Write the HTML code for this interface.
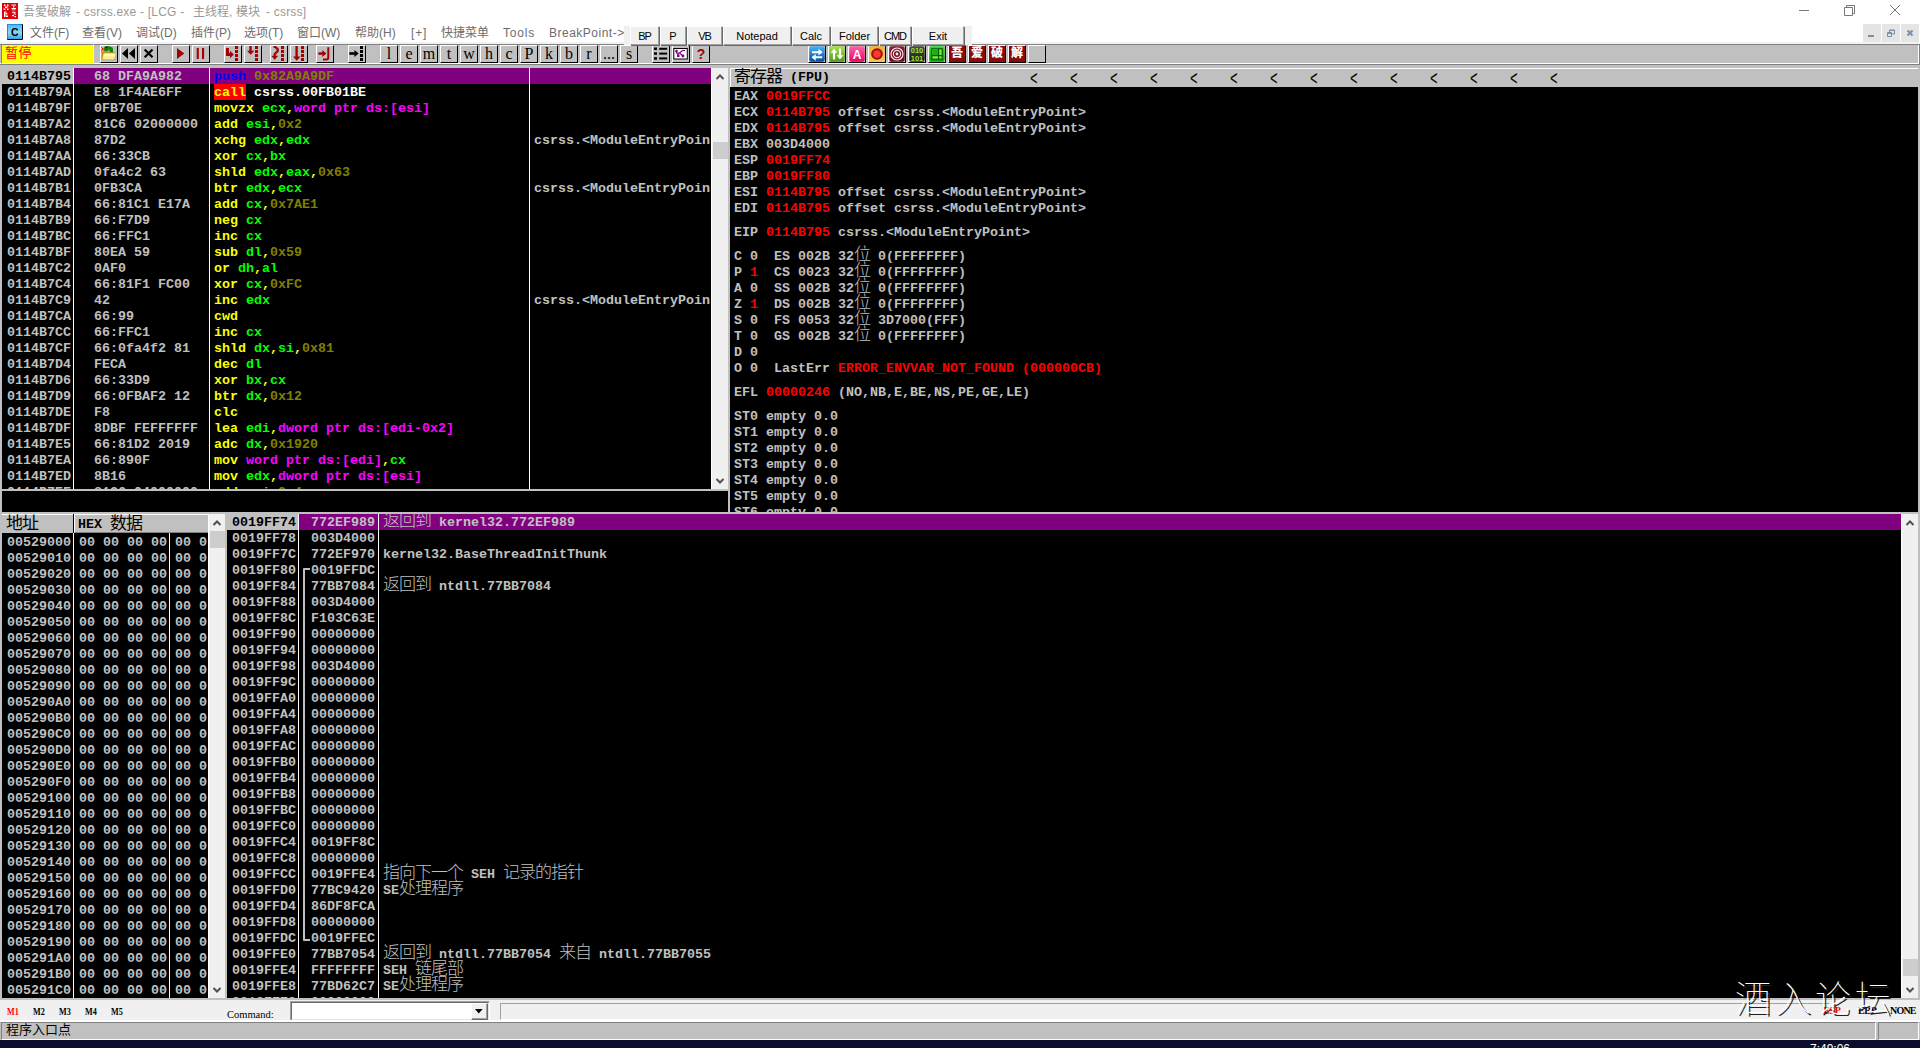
<!DOCTYPE html><html><head><meta charset="utf-8"><title>吾愛破解 - csrss.exe</title><style>
*{box-sizing:border-box}
html,body{margin:0;padding:0}
body{width:1920px;height:1048px;overflow:hidden;background:#fff;position:relative;font-family:"Liberation Sans","Noto Sans CJK SC",sans-serif}
.abs{position:absolute}
.mono{font-family:"Liberation Mono","Noto Sans CJK SC",monospace;font-weight:bold;font-size:13.33px;line-height:16px;white-space:pre;color:#c0c0c0}
.cj{font-family:"Liberation Sans","Noto Sans CJK SC",sans-serif;font-weight:300;font-size:17px;letter-spacing:-1px;line-height:16px;display:inline-block;vertical-align:top;position:relative;top:-2px}
.row{position:absolute;height:16px;white-space:pre}
.pane{position:absolute;background:#000;overflow:hidden}
.vl{position:absolute;width:1px;background:#fff;top:0;bottom:0}
.y{color:#ffff00}.g{color:#00ff00}.m{color:#ff00ff}.o{color:#808000}.r{color:#ff0000}.w{color:#fff}.b{color:#0000ff}
.sb{position:absolute;background:#f0f0f0;border-left:1px solid #fff}
.thumb{position:absolute;left:1px;width:15px;background:#cdcdcd}
.tb{position:absolute;top:45px;width:18px;height:18px;background:#c0c0c0;border-top:1px solid #fff;border-left:1px solid #fff;border-right:1px solid #000;border-bottom:1px solid #000;overflow:hidden}
.tb svg{position:absolute;left:0;top:0}
.tbl{font-family:"Liberation Serif",serif;font-size:16px;line-height:15px;text-align:center;color:#000}
.menu span{position:absolute;top:0;white-space:pre}
.btn2{position:absolute;top:26px;height:19px;background:#f0f0f0;border-top:1px solid #fff;border-left:1px solid #fff;border-right:1px solid #a0a0a0;border-bottom:1px solid #a0a0a0;box-shadow:1px 1px 0 #696969;font-size:11px;line-height:18px;text-align:center;color:#000;z-index:3}
</style></head><body>
<div class="abs" style="left:0;top:0;width:1920px;height:22px;background:#fff"></div>
<svg class="abs" style="left:2px;top:3px" width="16" height="16" viewBox="0 0 16 16"><rect width="16" height="16" fill="#e0040a"/><g fill="#fff"><rect x="2" y="1.500" width="1.500" height="1.500"/><rect x="5" y="1.500" width="1.500" height="2"/><rect x="3" y="3.500" width="2.500" height="1.500"/><rect x="1.500" y="5.500" width="2" height="1.300"/><rect x="5" y="5.500" width="1.500" height="1.500"/><rect x="9.500" y="1.500" width="4.500" height="1"/><rect x="11" y="3" width="1.300" height="1.500"/><rect x="9.500" y="5" width="4.500" height="1"/><rect x="10" y="6.500" width="3.500" height=".8"/><rect x="2" y="9" width="1.500" height="5"/><rect x="4" y="10" width="1.300" height="1.500"/><rect x="4" y="12.500" width="2" height="1.500"/><rect x="2.500" y="8.500" width="2" height="1"/><rect x="10" y="8.800" width="3.500" height="1"/><rect x="11.500" y="10.500" width="2.500" height="1"/><rect x="10" y="12" width="2" height="1.200"/><rect x="12.500" y="13" width="1.500" height="1.200"/></g></svg>
<div class="abs" style="left:0;top:4px;font-size:12px;line-height:16px;color:#999;white-space:pre"><span class="abs" style="left:23px">吾愛破解</span><span class="abs" style="left:76px;letter-spacing:.22px">- csrss.exe - [LCG -</span><span class="abs" style="left:193px">主线程,</span><span class="abs" style="left:236px">模块</span><span class="abs" style="left:266px;letter-spacing:.2px">- csrss]</span></div>
<svg class="abs" style="left:1790px;top:0" width="130" height="22" viewBox="0 0 130 22" fill="none" stroke="#777" stroke-width="1"><path d="M9 10.5h10"/><path d="M54.5 7.5h8v8h-8z"/><path d="M56.5 7.5v-2h8v8h-2"/><path d="M100 5l10 10M110 5l-10 10"/></svg>
<div class="abs menu" style="left:0;top:22px;width:1920px;height:22px;background:#fff;font-size:12px;line-height:16px;color:#6d6d6d">
<svg class="abs" style="left:7px;top:2px" width="16" height="16" viewBox="0 0 16 16"><defs><linearGradient id="cg" x1="0" y1="0" x2="0" y2="1"><stop offset="0" stop-color="#58b8f0"/><stop offset=".55" stop-color="#8ad6f8"/><stop offset="1" stop-color="#38a4e8"/></linearGradient></defs><rect x="0" y="0" width="16" height="16" rx="1" fill="#000"/><rect x="0" y="0" width="15" height="15" rx="1" fill="#1590dc"/><rect x="1" y="1" width="14" height="14" fill="url(#cg)"/><text x="7.700" y="11.600" font-family="Liberation Sans, sans-serif" font-size="10.500" font-weight="bold" text-anchor="middle" fill="#000">C</text></svg>
<span style="left:30px;top:3px">文件(F)</span>
<span style="left:82px;top:3px">查看(V)</span>
<span style="left:136px;top:3px">调试(D)</span>
<span style="left:191px;top:3px">插件(P)</span>
<span style="left:244px;top:3px">选项(T)</span>
<span style="left:297px;top:3px">窗口(W)</span>
<span style="left:355px;top:3px">帮助(H)</span>
<span style="left:411px;top:3px;letter-spacing:.8px">[+]</span>
<span style="left:441px;top:3px">快捷菜单</span>
<span style="left:503px;top:3px;letter-spacing:.8px">Tools</span>
<span style="left:549px;top:3px;letter-spacing:.5px">BreakPoint-&gt;</span>
</div>
<div class="abs" style="left:0;top:42px;width:1920px;height:2px;background:#f2f2f2"></div>
<div class="abs" style="left:624px;top:26px;width:348px;height:19px;background:#f0f0f0;z-index:2"></div>
<div class="btn2" style="left:630px;width:29px;letter-spacing:-1px">BP</div>
<div class="btn2" style="left:660px;width:26px">P</div>
<div class="btn2" style="left:687px;width:35px;letter-spacing:-1px">VB</div>
<div class="btn2" style="left:723px;width:68px">Notepad</div>
<div class="btn2" style="left:792px;width:38px">Calc</div>
<div class="btn2" style="left:831px;width:47px">Folder</div>
<div class="btn2" style="left:879px;width:32px;letter-spacing:-1px">CMD</div>
<div class="btn2" style="left:912px;width:52px">Exit</div>
<div class="abs" style="left:1863px;top:24px;width:18px;height:18px;background:#e5e5e5"></div>
<div class="abs" style="left:1882px;top:24px;width:18px;height:18px;background:#e5e5e5"></div>
<div class="abs" style="left:1901px;top:24px;width:18px;height:18px;background:#e5e5e5"></div>
<svg class="abs" style="left:1863px;top:24px" width="56" height="18" viewBox="0 0 56 18" fill="none" stroke="#7a8fa9"><path d="M5 12h6" stroke-width="2"/><path d="M24.5 8.5h4v4h-4z M24.5 9.5h4" stroke-width="1"/><path d="M26.5 8v-2h5v4h-2.5M26.5 6.5h5" stroke-width="1"/><path d="M44.5 6.5l5 5M49.5 6.5l-5 5" stroke-width="2"/></svg>
<div class="abs" style="left:0;top:44px;width:1920px;height:21px;background:#c0c0c0;border-top:1px solid #808080;border-bottom:1px solid #808080;border-right:1px solid #808080"><div class="abs" style="left:0;right:0;bottom:0;height:1px;background:#fff"></div><div class="abs" style="right:0;top:0;bottom:0;width:1px;background:#fff"></div></div>
<div class="abs" style="left:0;top:65px;width:1920px;height:935px;background:#c0c0c0"></div>
<div class="abs" style="left:1px;top:44px;width:93px;height:20px;background:#ffff00;border-top:1px solid #808080;border-left:1px solid #808080;border-right:1px solid #fff;border-bottom:1px solid #fff"><span class="abs" style="left:3px;top:0px;font-family:'Liberation Sans','Noto Sans CJK SC',sans-serif;font-weight:400;font-size:13px;line-height:16px;color:#ff0000;white-space:pre;letter-spacing:.5px">暂停</span></div>
<div class="tb " style="left:100px"><svg width="16" height="16" viewBox="0 0 16 16"><path d="M0.500 6q0-1.500 1.500-1.500h3.500l1.500 1.500h6q1.500 0 1.500 1.500v5q0 1.700-1.700 1.700h-10.600q-1.700 0-1.700-1.700z" fill="#c8981c"/><path d="M3.500 7.300h10.300q1 0 .8 1l-1 4.200q-.3 1-1.300 1h-10q-1 0-.7-1l.9-4.200q.2-1 1-1z" fill="#fdeb98"/><path d="M3.500 8h10.300l-.3 2h-10.500z" fill="#fff8c8"/><path d="M3 2.200q0-2.200 2.500-2.200h2q1.500 0 2 1h1q1.500 0 1.500 2v3.200h-3.500v-2.200h-1v1.200h-2.500q-2 0-2-1.500z" fill="#0a8a0a"/><circle cx="5.300" cy="1.500" r=".7" fill="#000"/><path d="M0.300 1.200l1.700 1.800l3 .3M0.300 4.800l1.700-1.800" stroke="#f00" stroke-width="1" fill="none"/></svg></div>
<div class="tb " style="left:120px"><svg width="16" height="16" viewBox="0 0 16 16"><path d="M1 7.500l6-5.500v11zM8 7.500l6-5.500v11z" fill="#000"/></svg></div>
<div class="tb " style="left:140px"><svg width="16" height="16" viewBox="0 0 16 16"><path d="M3.700 3.500l7.800 7.800M11.500 3.500l-7.800 7.800" stroke="#000" stroke-width="2.200"/></svg></div>
<div class="tb " style="left:172px"><svg width="16" height="16" viewBox="0 0 16 16"><path d="M4 2l7.300 5.500l-7.300 5.500z" fill="#a40000"/></svg></div>
<div class="tb " style="left:192px"><svg width="16" height="16" viewBox="0 0 16 16"><rect x="3.700" y="2" width="2.100" height="11" fill="#a40000"/><rect x="9" y="2" width="2.100" height="11" fill="#a40000"/></svg></div>
<div class="tb " style="left:224px"><svg width="16" height="16" viewBox="0 0 16 16"><rect x="1" y="2" width="3" height="8" fill="#a40000"/><rect x="1" y="7" width="5" height="3" fill="#a40000"/><path d="M5 4.800l3.800 3.700l-3.800 3.700z" fill="#a40000"/><rect x="10" y="0" width="3" height="3" fill="#a40000"/><rect x="10" y="4" width="3" height="3" fill="#a40000"/><rect x="10" y="8" width="3" height="3" fill="#a40000"/><rect x="10" y="12" width="3" height="3" fill="#a40000"/></svg></div>
<div class="tb " style="left:244px"><svg width="16" height="16" viewBox="0 0 16 16"><rect x="4.300" y="0" width="2.400" height="6" fill="#a40000"/><path d="M2 4.800h7.400l-3.700 4z" fill="#a40000"/><rect x="10" y="0" width="3" height="3" fill="#a40000"/><rect x="10" y="4" width="3" height="3" fill="#a40000"/><rect x="10" y="8" width="3" height="3" fill="#a40000"/><rect x="10" y="12" width="3" height="3" fill="#a40000"/></svg></div>
<div class="tb " style="left:270px"><svg width="16" height="16" viewBox="0 0 16 16"><path d="M2.500 1h2l2.300 2.500v1.500l-3.100 3v3" stroke="#a40000" stroke-width="2.200" fill="none"/><path d="M0.200 9.800h7l-3.500 3.900z" fill="#a40000"/><rect x="10" y="0" width="3" height="3" fill="#a40000"/><rect x="10" y="4" width="3" height="3" fill="#a40000"/><rect x="10" y="8" width="3" height="3" fill="#a40000"/><rect x="10" y="12" width="3" height="3" fill="#a40000"/></svg></div>
<div class="tb " style="left:290px"><svg width="16" height="16" viewBox="0 0 16 16"><rect x="4.400" y="0" width="2.400" height="12" fill="#a40000"/><path d="M2 10.500h7.500l-3.750 4.200z" fill="#a40000"/><rect x="10" y="0" width="3" height="3" fill="#a40000"/><rect x="10" y="4" width="3" height="3" fill="#a40000"/><rect x="10" y="8" width="3" height="3" fill="#a40000"/><rect x="10" y="12" width="3" height="3" fill="#a40000"/></svg></div>
<div class="tb " style="left:316px"><svg width="16" height="16" viewBox="0 0 16 16"><rect x="1.400" y="6.300" width="4.500" height="2.500" fill="#a40000"/><path d="M5.300 4l4 3.500l-4 3.500z" fill="#a40000"/><path d="M11.300 1.300v10.300q0 2-2 2h-3.300" stroke="#a40000" stroke-width="2" fill="none"/></svg></div>
<div class="tb " style="left:348px"><svg width="16" height="16" viewBox="0 0 16 16"><rect x="0.300" y="6.200" width="5.500" height="2.600" fill="#000"/><path d="M5.400 4l4.300 3.500l-4.300 3.500z" fill="#000"/><rect x="11" y="0" width="3" height="3" fill="#000"/><rect x="11" y="4" width="3" height="3" fill="#000"/><rect x="11" y="8" width="3" height="3" fill="#000"/><rect x="11" y="12" width="3" height="3" fill="#000"/></svg></div>
<div class="tb " style="left:380px"><div class="tbl" style="width:16px">l</div></div>
<div class="tb " style="left:400px"><div class="tbl" style="width:16px">e</div></div>
<div class="tb " style="left:420px"><div class="tbl" style="width:16px">m</div></div>
<div class="tb " style="left:440px"><div class="tbl" style="width:16px">t</div></div>
<div class="tb " style="left:460px"><div class="tbl" style="width:16px">w</div></div>
<div class="tb " style="left:480px"><div class="tbl" style="width:16px">h</div></div>
<div class="tb " style="left:500px"><div class="tbl" style="width:16px">c</div></div>
<div class="tb " style="left:520px"><div class="tbl" style="width:16px">P</div></div>
<div class="tb " style="left:540px"><div class="tbl" style="width:16px">k</div></div>
<div class="tb " style="left:560px"><div class="tbl" style="width:16px">b</div></div>
<div class="tb " style="left:580px"><div class="tbl" style="width:16px">r</div></div>
<div class="tb " style="left:600px"><div class="tbl" style="width:16px">...</div></div>
<div class="tb " style="left:620px"><div class="tbl" style="width:16px">s</div></div>
<div class="tb " style="left:652px"><svg width="16" height="16" viewBox="0 0 16 16"><g fill="#000"><rect x="1" y="1.500" width="3" height="2.500"/><rect x="1" y="6.300" width="3" height="2.500"/><rect x="1" y="11.200" width="3" height="2.500"/><rect x="6.200" y="1.800" width="8" height="2"/><rect x="6.200" y="6.600" width="8" height="2"/><rect x="6.200" y="11.400" width="8" height="2"/></g></svg></div>
<div class="tb " style="left:672px"><svg width="16" height="16" viewBox="0 0 16 16"><rect x="0.800" y="2.500" width="13.500" height="10.500" fill="#fff" stroke="#000" stroke-width="1"/><g fill="#800080"><circle cx="3.500" cy="5" r="1.300"/><rect x="4" y="8.500" width="2.500" height="2.500"/><circle cx="10" cy="10" r="1.400"/></g><path d="M3.500 5v2h3l3.500 3M6.500 7l3-2.500h2.500M5 7v2" stroke="#800080" stroke-width="1.200" fill="none"/></svg></div>
<div class="tb " style="left:692px"><div style="width:16px;text-align:center;font:bold 14px/17px 'Liberation Sans',sans-serif;color:#a00000">?</div></div>
<div class="tb " style="left:808px"><svg width="16" height="16" viewBox="0 0 16 16"><defs><linearGradient id="g1" x1="0" y1="0" x2="0" y2="1"><stop offset="0" stop-color="#45b4f8"/><stop offset="1" stop-color="#0a4c9c"/></linearGradient></defs><rect x="0.300" y="0.300" width="15.400" height="15.400" rx="2.800" fill="url(#g1)"/><path d="M3 5.200h6.500v-2.400l4.200 3.400l-4.200 3.200v-2.200h-6.500z" fill="#fff"/><path d="M13.200 10.300h-6.500v-2.200l-4.200 3.200l4.200 3.400v-2.400h6.500z" fill="#fff"/></svg></div>
<div class="tb " style="left:828px"><svg width="16" height="16" viewBox="0 0 16 16"><defs><linearGradient id="g2" x1="0" y1="0" x2="0" y2="1"><stop offset="0" stop-color="#a4e44e"/><stop offset="1" stop-color="#4c9c10"/></linearGradient></defs><rect x="0.300" y="0.300" width="15.400" height="15.400" rx="2.800" fill="url(#g2)"/><path d="M5 2.500l3.200 4.300h-2.100v6.700h-2.200v-6.700h-2.100zM11 13.500l-3.200-4.300h2.100v-6.700h2.200v6.700h2.100z" fill="#fff"/></svg></div>
<div class="tb " style="left:848px"><svg width="16" height="16" viewBox="0 0 16 16"><defs><linearGradient id="g3" x1="0" y1="0" x2="0" y2="1"><stop offset="0" stop-color="#ff62ac"/><stop offset="1" stop-color="#ee0060"/></linearGradient></defs><rect x="0.300" y="0.300" width="15.400" height="15.400" rx="2.800" fill="url(#g3)"/><text x="8" y="12.800" font-family="Liberation Sans,sans-serif" font-weight="bold" font-size="12" text-anchor="middle" fill="#fff">A</text></svg></div>
<div class="tb " style="left:868px"><svg width="16" height="16" viewBox="0 0 16 16"><defs><linearGradient id="g4" x1="0" y1="0" x2="0" y2="1"><stop offset="0" stop-color="#f4b030"/><stop offset="1" stop-color="#f8c850"/></linearGradient></defs><rect x="0.300" y="0.300" width="15.400" height="15.400" rx="2.800" fill="url(#g4)"/><circle cx="8" cy="8" r="5.800" fill="#7a1010"/><circle cx="8" cy="8" r="4.600" fill="#e81818"/><circle cx="8" cy="8" r="3.200" fill="#ff3a30"/></svg></div>
<div class="tb " style="left:888px"><svg width="16" height="16" viewBox="0 0 16 16"><defs><linearGradient id="g5" x1="0" y1="0" x2="0" y2="1"><stop offset="0" stop-color="#8a1c30"/><stop offset="1" stop-color="#70081c"/></linearGradient></defs><rect x="0.300" y="0.300" width="15.400" height="15.400" rx="2.800" fill="url(#g5)"/><circle cx="8" cy="8" r="6" fill="none" stroke="#f4e4e8" stroke-width="1.200"/><circle cx="8" cy="8" r="3.600" fill="none" stroke="#f4e4e8" stroke-width="1.100"/><circle cx="8" cy="8" r="1.400" fill="#f4e4e8"/></svg></div>
<div class="tb " style="left:908px"><svg width="16" height="16" viewBox="0 0 16 16"><defs><linearGradient id="g6" x1="0" y1="0" x2="0" y2="1"><stop offset="0" stop-color="#4a4a4a"/><stop offset="1" stop-color="#1c1c1c"/></linearGradient></defs><rect x="0.300" y="0.300" width="15.400" height="15.400" rx="2.800" fill="url(#g6)"/><text x="8" y="7.300" font-family="Liberation Sans,sans-serif" font-weight="bold" font-size="7.500" text-anchor="middle" fill="#9be22a">010</text><text x="8" y="14.600" font-family="Liberation Sans,sans-serif" font-weight="bold" font-size="7.500" text-anchor="middle" fill="#9be22a">101</text></svg></div>
<div class="tb " style="left:928px"><svg width="16" height="16" viewBox="0 0 16 16"><defs><linearGradient id="g7" x1="0" y1="0" x2="0" y2="1"><stop offset="0" stop-color="#28e028"/><stop offset="1" stop-color="#08a008"/></linearGradient></defs><rect x="0.300" y="0.300" width="15.400" height="15.400" rx="2.800" fill="url(#g7)"/><rect x="2.800" y="2.800" width="10.400" height="10.400" fill="#7cf040" stroke="#0a5a0a" stroke-width="1.200"/><rect x="3.500" y="3.500" width="5.500" height="5.500" fill="#18b018"/><path d="M2.800 9.600h10.400M9.600 2.800v10.400" stroke="#0a5a0a" stroke-width="1.200"/></svg></div>
<div class="tb " style="left:948px"><div style="width:16px;height:16px;background:#8c0a0a;color:#fff;font:900 12px/16px 'Liberation Sans','Noto Sans CJK SC',sans-serif;text-align:center;overflow:hidden"><span style="position:relative;top:-1px">吾</span></div></div>
<div class="tb " style="left:968px"><div style="width:16px;height:16px;background:#8c0a0a;color:#fff;font:900 12px/16px 'Liberation Sans','Noto Sans CJK SC',sans-serif;text-align:center;overflow:hidden"><span style="position:relative;top:-1px">爱</span></div></div>
<div class="tb " style="left:988px"><div style="width:16px;height:16px;background:#8c0a0a;color:#fff;font:900 12px/16px 'Liberation Sans','Noto Sans CJK SC',sans-serif;text-align:center;overflow:hidden"><span style="position:relative;top:-1px">破</span></div></div>
<div class="tb " style="left:1008px"><div style="width:16px;height:16px;background:#8c0a0a;color:#fff;font:900 12px/16px 'Liberation Sans','Noto Sans CJK SC',sans-serif;text-align:center;overflow:hidden"><span style="position:relative;top:-1px">解</span></div></div>
<div class="tb " style="left:1028px"></div>
<div class="pane" style="left:2px;top:68px;width:709px;height:421px">
<div class="abs" style="left:0;top:0;width:71px;height:16px;background:#c0c0c0"></div>
<div class="abs" style="left:72px;top:0;width:637px;height:16px;background:#800080"></div>
<div class="vl" style="left:71px"></div>
<div class="vl" style="left:207px"></div>
<div class="vl" style="left:527px"></div>
<div class="abs" style="left:212px;top:16px;width:32px;height:16px;background:#ff0000"></div>
<div class="row mono" style="left:5px;top:1px;color:#000">0114B795</div>
<div class="row mono" style="left:92px;top:1px;">68 DFA9A982</div>
<div class="row mono" style="left:212px;top:1px;"><span class="b">push</span> <span class="o">0x82A9A9DF</span></div>
<div class="row mono" style="left:5px;top:17px;">0114B79A</div>
<div class="row mono" style="left:92px;top:17px;">E8 1F4AE6FF</div>
<div class="row mono" style="left:212px;top:17px;"><span style="color:#ffff00">call</span><span class="w"> csrss.00FB01BE</span></div>
<div class="row mono" style="left:5px;top:33px;">0114B79F</div>
<div class="row mono" style="left:92px;top:33px;">0FB70E</div>
<div class="row mono" style="left:212px;top:33px;"><span class="y">movzx </span><span class="g">ecx</span><span class="y">,</span><span class="m">word ptr ds:[esi]</span></div>
<div class="row mono" style="left:5px;top:49px;">0114B7A2</div>
<div class="row mono" style="left:92px;top:49px;">81C6 02000000</div>
<div class="row mono" style="left:212px;top:49px;"><span class="y">add </span><span class="g">esi</span><span class="y">,</span><span class="o">0x2</span></div>
<div class="row mono" style="left:5px;top:65px;">0114B7A8</div>
<div class="row mono" style="left:92px;top:65px;">87D2</div>
<div class="row mono" style="left:212px;top:65px;"><span class="y">xchg </span><span class="g">edx</span><span class="y">,</span><span class="g">edx</span></div>
<div class="row mono" style="left:532px;top:65px;width:177px;overflow:hidden">csrss.&lt;ModuleEntryPoin</div>
<div class="row mono" style="left:5px;top:81px;">0114B7AA</div>
<div class="row mono" style="left:92px;top:81px;">66:33CB</div>
<div class="row mono" style="left:212px;top:81px;"><span class="y">xor </span><span class="g">cx</span><span class="y">,</span><span class="g">bx</span></div>
<div class="row mono" style="left:5px;top:97px;">0114B7AD</div>
<div class="row mono" style="left:92px;top:97px;">0fa4c2 63</div>
<div class="row mono" style="left:212px;top:97px;"><span class="y">shld </span><span class="g">edx</span><span class="y">,</span><span class="g">eax</span><span class="y">,</span><span class="o">0x63</span></div>
<div class="row mono" style="left:5px;top:113px;">0114B7B1</div>
<div class="row mono" style="left:92px;top:113px;">0FB3CA</div>
<div class="row mono" style="left:212px;top:113px;"><span class="y">btr </span><span class="g">edx</span><span class="y">,</span><span class="g">ecx</span></div>
<div class="row mono" style="left:532px;top:113px;width:177px;overflow:hidden">csrss.&lt;ModuleEntryPoin</div>
<div class="row mono" style="left:5px;top:129px;">0114B7B4</div>
<div class="row mono" style="left:92px;top:129px;">66:81C1 E17A</div>
<div class="row mono" style="left:212px;top:129px;"><span class="y">add </span><span class="g">cx</span><span class="y">,</span><span class="o">0x7AE1</span></div>
<div class="row mono" style="left:5px;top:145px;">0114B7B9</div>
<div class="row mono" style="left:92px;top:145px;">66:F7D9</div>
<div class="row mono" style="left:212px;top:145px;"><span class="y">neg </span><span class="g">cx</span></div>
<div class="row mono" style="left:5px;top:161px;">0114B7BC</div>
<div class="row mono" style="left:92px;top:161px;">66:FFC1</div>
<div class="row mono" style="left:212px;top:161px;"><span class="y">inc </span><span class="g">cx</span></div>
<div class="row mono" style="left:5px;top:177px;">0114B7BF</div>
<div class="row mono" style="left:92px;top:177px;">80EA 59</div>
<div class="row mono" style="left:212px;top:177px;"><span class="y">sub </span><span class="g">dl</span><span class="y">,</span><span class="o">0x59</span></div>
<div class="row mono" style="left:5px;top:193px;">0114B7C2</div>
<div class="row mono" style="left:92px;top:193px;">0AF0</div>
<div class="row mono" style="left:212px;top:193px;"><span class="y">or </span><span class="g">dh</span><span class="y">,</span><span class="g">al</span></div>
<div class="row mono" style="left:5px;top:209px;">0114B7C4</div>
<div class="row mono" style="left:92px;top:209px;">66:81F1 FC00</div>
<div class="row mono" style="left:212px;top:209px;"><span class="y">xor </span><span class="g">cx</span><span class="y">,</span><span class="o">0xFC</span></div>
<div class="row mono" style="left:5px;top:225px;">0114B7C9</div>
<div class="row mono" style="left:92px;top:225px;">42</div>
<div class="row mono" style="left:212px;top:225px;"><span class="y">inc </span><span class="g">edx</span></div>
<div class="row mono" style="left:532px;top:225px;width:177px;overflow:hidden">csrss.&lt;ModuleEntryPoin</div>
<div class="row mono" style="left:5px;top:241px;">0114B7CA</div>
<div class="row mono" style="left:92px;top:241px;">66:99</div>
<div class="row mono" style="left:212px;top:241px;"><span class="y">cwd</span></div>
<div class="row mono" style="left:5px;top:257px;">0114B7CC</div>
<div class="row mono" style="left:92px;top:257px;">66:FFC1</div>
<div class="row mono" style="left:212px;top:257px;"><span class="y">inc </span><span class="g">cx</span></div>
<div class="row mono" style="left:5px;top:273px;">0114B7CF</div>
<div class="row mono" style="left:92px;top:273px;">66:0fa4f2 81</div>
<div class="row mono" style="left:212px;top:273px;"><span class="y">shld </span><span class="g">dx</span><span class="y">,</span><span class="g">si</span><span class="y">,</span><span class="o">0x81</span></div>
<div class="row mono" style="left:5px;top:289px;">0114B7D4</div>
<div class="row mono" style="left:92px;top:289px;">FECA</div>
<div class="row mono" style="left:212px;top:289px;"><span class="y">dec </span><span class="g">dl</span></div>
<div class="row mono" style="left:5px;top:305px;">0114B7D6</div>
<div class="row mono" style="left:92px;top:305px;">66:33D9</div>
<div class="row mono" style="left:212px;top:305px;"><span class="y">xor </span><span class="g">bx</span><span class="y">,</span><span class="g">cx</span></div>
<div class="row mono" style="left:5px;top:321px;">0114B7D9</div>
<div class="row mono" style="left:92px;top:321px;">66:0FBAF2 12</div>
<div class="row mono" style="left:212px;top:321px;"><span class="y">btr </span><span class="g">dx</span><span class="y">,</span><span class="o">0x12</span></div>
<div class="row mono" style="left:5px;top:337px;">0114B7DE</div>
<div class="row mono" style="left:92px;top:337px;">F8</div>
<div class="row mono" style="left:212px;top:337px;"><span class="y">clc</span></div>
<div class="row mono" style="left:5px;top:353px;">0114B7DF</div>
<div class="row mono" style="left:92px;top:353px;">8DBF FEFFFFFF</div>
<div class="row mono" style="left:212px;top:353px;"><span class="y">lea </span><span class="g">edi</span><span class="y">,</span><span class="m">dword ptr ds:[edi-0x2]</span></div>
<div class="row mono" style="left:5px;top:369px;">0114B7E5</div>
<div class="row mono" style="left:92px;top:369px;">66:81D2 2019</div>
<div class="row mono" style="left:212px;top:369px;"><span class="y">adc </span><span class="g">dx</span><span class="y">,</span><span class="o">0x1920</span></div>
<div class="row mono" style="left:5px;top:385px;">0114B7EA</div>
<div class="row mono" style="left:92px;top:385px;">66:890F</div>
<div class="row mono" style="left:212px;top:385px;"><span class="y">mov </span><span class="m">word ptr ds:[edi]</span><span class="y">,</span><span class="g">cx</span></div>
<div class="row mono" style="left:5px;top:401px;">0114B7ED</div>
<div class="row mono" style="left:92px;top:401px;">8B16</div>
<div class="row mono" style="left:212px;top:401px;"><span class="y">mov </span><span class="g">edx</span><span class="y">,</span><span class="m">dword ptr ds:[esi]</span></div>
<div class="row mono" style="left:5px;top:417px;">0114B7EF</div>
<div class="row mono" style="left:92px;top:417px;">81C6 04000000</div>
<div class="row mono" style="left:212px;top:417px;"><span class="y">add </span><span class="g">esi</span><span class="y">,</span><span class="o">0x4</span></div>
</div>
<div class="sb" style="left:711px;top:68px;width:17px;height:421px"><div class="thumb" style="top:74px;height:17px"></div><svg class="abs" style="left:1px;top:0" width="15" height="17" viewBox="0 0 15 17"><path d="M3.500 11l3.500-3.500l3.500 3.500" stroke="#505050" stroke-width="2" fill="none"/></svg><svg class="abs" style="left:1px;bottom:0" width="15" height="17" viewBox="0 0 15 17"><path d="M3.500 7l3.500 3.500l3.500-3.500" stroke="#505050" stroke-width="2" fill="none"/></svg></div>
<div class="pane" style="left:2px;top:491px;width:726px;height:21px"></div>
<div class="pane" style="left:730px;top:68px;width:1188px;height:444px">
<div class="abs" style="left:0;top:0;width:1188px;height:19px;background:#c0c0c0;border-top:1px solid #fff;border-left:1px solid #fff"></div>
<div class="row mono" style="left:4px;top:2px;color:#000"><span style="font-weight:normal"><span class="cj" style="top:-1px;font-weight:400">寄存器</span></span> (FPU)</div>
<div class="row mono" style="left:300px;top:5px;color:#000;font-weight:normal;font-size:15px;transform:scale(.85,1.3);transform-origin:0 55%">&lt;</div>
<div class="row mono" style="left:340px;top:5px;color:#000;font-weight:normal;font-size:15px;transform:scale(.85,1.3);transform-origin:0 55%">&lt;</div>
<div class="row mono" style="left:380px;top:5px;color:#000;font-weight:normal;font-size:15px;transform:scale(.85,1.3);transform-origin:0 55%">&lt;</div>
<div class="row mono" style="left:420px;top:5px;color:#000;font-weight:normal;font-size:15px;transform:scale(.85,1.3);transform-origin:0 55%">&lt;</div>
<div class="row mono" style="left:460px;top:5px;color:#000;font-weight:normal;font-size:15px;transform:scale(.85,1.3);transform-origin:0 55%">&lt;</div>
<div class="row mono" style="left:500px;top:5px;color:#000;font-weight:normal;font-size:15px;transform:scale(.85,1.3);transform-origin:0 55%">&lt;</div>
<div class="row mono" style="left:540px;top:5px;color:#000;font-weight:normal;font-size:15px;transform:scale(.85,1.3);transform-origin:0 55%">&lt;</div>
<div class="row mono" style="left:580px;top:5px;color:#000;font-weight:normal;font-size:15px;transform:scale(.85,1.3);transform-origin:0 55%">&lt;</div>
<div class="row mono" style="left:620px;top:5px;color:#000;font-weight:normal;font-size:15px;transform:scale(.85,1.3);transform-origin:0 55%">&lt;</div>
<div class="row mono" style="left:660px;top:5px;color:#000;font-weight:normal;font-size:15px;transform:scale(.85,1.3);transform-origin:0 55%">&lt;</div>
<div class="row mono" style="left:700px;top:5px;color:#000;font-weight:normal;font-size:15px;transform:scale(.85,1.3);transform-origin:0 55%">&lt;</div>
<div class="row mono" style="left:740px;top:5px;color:#000;font-weight:normal;font-size:15px;transform:scale(.85,1.3);transform-origin:0 55%">&lt;</div>
<div class="row mono" style="left:780px;top:5px;color:#000;font-weight:normal;font-size:15px;transform:scale(.85,1.3);transform-origin:0 55%">&lt;</div>
<div class="row mono" style="left:820px;top:5px;color:#000;font-weight:normal;font-size:15px;transform:scale(.85,1.3);transform-origin:0 55%">&lt;</div>
<div class="row mono" style="left:4px;top:21px;">EAX <span class="r">0019FFCC</span></div>
<div class="row mono" style="left:4px;top:37px;">ECX <span class="r">0114B795</span> offset csrss.&lt;ModuleEntryPoint&gt;</div>
<div class="row mono" style="left:4px;top:53px;">EDX <span class="r">0114B795</span> offset csrss.&lt;ModuleEntryPoint&gt;</div>
<div class="row mono" style="left:4px;top:69px;">EBX 003D4000</div>
<div class="row mono" style="left:4px;top:85px;">ESP <span class="r">0019FF74</span></div>
<div class="row mono" style="left:4px;top:101px;">EBP <span class="r">0019FF80</span></div>
<div class="row mono" style="left:4px;top:117px;">ESI <span class="r">0114B795</span> offset csrss.&lt;ModuleEntryPoint&gt;</div>
<div class="row mono" style="left:4px;top:133px;">EDI <span class="r">0114B795</span> offset csrss.&lt;ModuleEntryPoint&gt;</div>
<div class="row mono" style="left:4px;top:157px;">EIP <span class="r">0114B795</span> csrss.&lt;ModuleEntryPoint&gt;</div>
<div class="row mono" style="left:4px;top:181px;">C 0  ES 002B 32<span class="cj">位</span> 0(FFFFFFFF)</div>
<div class="row mono" style="left:4px;top:197px;">P <span class="r">1</span>  CS 0023 32<span class="cj">位</span> 0(FFFFFFFF)</div>
<div class="row mono" style="left:4px;top:213px;">A 0  SS 002B 32<span class="cj">位</span> 0(FFFFFFFF)</div>
<div class="row mono" style="left:4px;top:229px;">Z <span class="r">1</span>  DS 002B 32<span class="cj">位</span> 0(FFFFFFFF)</div>
<div class="row mono" style="left:4px;top:245px;">S 0  FS 0053 32<span class="cj">位</span> 3D7000(FFF)</div>
<div class="row mono" style="left:4px;top:261px;">T 0  GS 002B 32<span class="cj">位</span> 0(FFFFFFFF)</div>
<div class="row mono" style="left:4px;top:277px;">D 0 </div>
<div class="row mono" style="left:4px;top:293px;">O 0  LastErr <span class="r">ERROR_ENVVAR_NOT_FOUND (000000CB)</span></div>
<div class="row mono" style="left:4px;top:317px;">EFL <span class="r">00000246</span> (NO,NB,E,BE,NS,PE,GE,LE)</div>
<div class="row mono" style="left:4px;top:341px;">ST0 empty 0.0</div>
<div class="row mono" style="left:4px;top:357px;">ST1 empty 0.0</div>
<div class="row mono" style="left:4px;top:373px;">ST2 empty 0.0</div>
<div class="row mono" style="left:4px;top:389px;">ST3 empty 0.0</div>
<div class="row mono" style="left:4px;top:405px;">ST4 empty 0.0</div>
<div class="row mono" style="left:4px;top:421px;">ST5 empty 0.0</div>
<div class="row mono" style="left:4px;top:437px;">ST6 empty 0.0</div>
</div>
<div class="pane" style="left:2px;top:514px;width:206px;height:484px">
<div class="abs" style="left:0;top:0;width:71px;height:19px;background:#c0c0c0;border-top:1px solid #fff"></div>
<div class="abs" style="left:71px;top:0;width:1px;height:19px;background:#000"></div>
<div class="abs" style="left:72px;top:0;width:134px;height:19px;background:#c0c0c0;border-top:1px solid #fff;border-left:1px solid #fff;border-bottom:1px solid #808080"></div>
<div class="row mono" style="left:4px;top:3px;color:#000;font-weight:normal"><span class="cj" style="top:-1px;font-weight:400">地址</span></div>
<div class="row mono" style="left:76px;top:3px;color:#000">HEX <span class="cj" style="top:-1px;font-weight:400">数据</span></div>
<div class="vl" style="left:71px;top:19px"></div><div class="vl" style="left:167px;top:19px"></div>
<div class="row mono" style="left:5px;top:21px;">00529000</div>
<div class="row mono" style="left:77px;top:21px;">00 00 00 00 00 0</div>
<div class="row mono" style="left:5px;top:37px;">00529010</div>
<div class="row mono" style="left:77px;top:37px;">00 00 00 00 00 0</div>
<div class="row mono" style="left:5px;top:53px;">00529020</div>
<div class="row mono" style="left:77px;top:53px;">00 00 00 00 00 0</div>
<div class="row mono" style="left:5px;top:69px;">00529030</div>
<div class="row mono" style="left:77px;top:69px;">00 00 00 00 00 0</div>
<div class="row mono" style="left:5px;top:85px;">00529040</div>
<div class="row mono" style="left:77px;top:85px;">00 00 00 00 00 0</div>
<div class="row mono" style="left:5px;top:101px;">00529050</div>
<div class="row mono" style="left:77px;top:101px;">00 00 00 00 00 0</div>
<div class="row mono" style="left:5px;top:117px;">00529060</div>
<div class="row mono" style="left:77px;top:117px;">00 00 00 00 00 0</div>
<div class="row mono" style="left:5px;top:133px;">00529070</div>
<div class="row mono" style="left:77px;top:133px;">00 00 00 00 00 0</div>
<div class="row mono" style="left:5px;top:149px;">00529080</div>
<div class="row mono" style="left:77px;top:149px;">00 00 00 00 00 0</div>
<div class="row mono" style="left:5px;top:165px;">00529090</div>
<div class="row mono" style="left:77px;top:165px;">00 00 00 00 00 0</div>
<div class="row mono" style="left:5px;top:181px;">005290A0</div>
<div class="row mono" style="left:77px;top:181px;">00 00 00 00 00 0</div>
<div class="row mono" style="left:5px;top:197px;">005290B0</div>
<div class="row mono" style="left:77px;top:197px;">00 00 00 00 00 0</div>
<div class="row mono" style="left:5px;top:213px;">005290C0</div>
<div class="row mono" style="left:77px;top:213px;">00 00 00 00 00 0</div>
<div class="row mono" style="left:5px;top:229px;">005290D0</div>
<div class="row mono" style="left:77px;top:229px;">00 00 00 00 00 0</div>
<div class="row mono" style="left:5px;top:245px;">005290E0</div>
<div class="row mono" style="left:77px;top:245px;">00 00 00 00 00 0</div>
<div class="row mono" style="left:5px;top:261px;">005290F0</div>
<div class="row mono" style="left:77px;top:261px;">00 00 00 00 00 0</div>
<div class="row mono" style="left:5px;top:277px;">00529100</div>
<div class="row mono" style="left:77px;top:277px;">00 00 00 00 00 0</div>
<div class="row mono" style="left:5px;top:293px;">00529110</div>
<div class="row mono" style="left:77px;top:293px;">00 00 00 00 00 0</div>
<div class="row mono" style="left:5px;top:309px;">00529120</div>
<div class="row mono" style="left:77px;top:309px;">00 00 00 00 00 0</div>
<div class="row mono" style="left:5px;top:325px;">00529130</div>
<div class="row mono" style="left:77px;top:325px;">00 00 00 00 00 0</div>
<div class="row mono" style="left:5px;top:341px;">00529140</div>
<div class="row mono" style="left:77px;top:341px;">00 00 00 00 00 0</div>
<div class="row mono" style="left:5px;top:357px;">00529150</div>
<div class="row mono" style="left:77px;top:357px;">00 00 00 00 00 0</div>
<div class="row mono" style="left:5px;top:373px;">00529160</div>
<div class="row mono" style="left:77px;top:373px;">00 00 00 00 00 0</div>
<div class="row mono" style="left:5px;top:389px;">00529170</div>
<div class="row mono" style="left:77px;top:389px;">00 00 00 00 00 0</div>
<div class="row mono" style="left:5px;top:405px;">00529180</div>
<div class="row mono" style="left:77px;top:405px;">00 00 00 00 00 0</div>
<div class="row mono" style="left:5px;top:421px;">00529190</div>
<div class="row mono" style="left:77px;top:421px;">00 00 00 00 00 0</div>
<div class="row mono" style="left:5px;top:437px;">005291A0</div>
<div class="row mono" style="left:77px;top:437px;">00 00 00 00 00 0</div>
<div class="row mono" style="left:5px;top:453px;">005291B0</div>
<div class="row mono" style="left:77px;top:453px;">00 00 00 00 00 0</div>
<div class="row mono" style="left:5px;top:469px;">005291C0</div>
<div class="row mono" style="left:77px;top:469px;">00 00 00 00 00 0</div>
<div class="row mono" style="left:5px;top:485px;">005291D0</div>
<div class="row mono" style="left:77px;top:485px;">00 00 00 00 00 0</div>
</div>
<div class="sb" style="left:208px;top:514px;width:17px;height:484px"><div class="thumb" style="top:17px;height:17px"></div><svg class="abs" style="left:1px;top:0" width="15" height="17" viewBox="0 0 15 17"><path d="M3.500 11l3.500-3.500l3.500 3.500" stroke="#505050" stroke-width="2" fill="none"/></svg><svg class="abs" style="left:1px;bottom:0" width="15" height="17" viewBox="0 0 15 17"><path d="M3.500 7l3.500 3.500l3.500-3.500" stroke="#505050" stroke-width="2" fill="none"/></svg></div>
<div class="pane" style="left:227px;top:514px;width:1674px;height:484px">
<div class="abs" style="left:0;top:0;width:71px;height:16px;background:#c0c0c0"></div>
<div class="abs" style="left:72px;top:0;width:1602px;height:16px;background:#800080"></div>
<div class="vl" style="left:71px"></div><div class="vl" style="left:151px"></div>
<div class="row mono" style="left:5px;top:1px;color:#000">0019FF74</div>
<div class="row mono" style="left:84px;top:1px;">772EF989</div>
<div class="row mono" style="left:156px;top:1px;"><span class="cj">返回到</span> kernel32.772EF989</div>
<div class="row mono" style="left:5px;top:17px;">0019FF78</div>
<div class="row mono" style="left:84px;top:17px;">003D4000</div>
<div class="row mono" style="left:5px;top:33px;">0019FF7C</div>
<div class="row mono" style="left:84px;top:33px;">772EF970</div>
<div class="row mono" style="left:156px;top:33px;">kernel32.BaseThreadInitThunk</div>
<div class="row mono" style="left:5px;top:49px;">0019FF80</div>
<div class="row mono" style="left:84px;top:49px;">0019FFDC</div>
<div class="row mono" style="left:5px;top:65px;">0019FF84</div>
<div class="row mono" style="left:84px;top:65px;">77BB7084</div>
<div class="row mono" style="left:156px;top:65px;"><span class="cj">返回到</span> ntdll.77BB7084</div>
<div class="row mono" style="left:5px;top:81px;">0019FF88</div>
<div class="row mono" style="left:84px;top:81px;">003D4000</div>
<div class="row mono" style="left:5px;top:97px;">0019FF8C</div>
<div class="row mono" style="left:84px;top:97px;">F103C63E</div>
<div class="row mono" style="left:5px;top:113px;">0019FF90</div>
<div class="row mono" style="left:84px;top:113px;">00000000</div>
<div class="row mono" style="left:5px;top:129px;">0019FF94</div>
<div class="row mono" style="left:84px;top:129px;">00000000</div>
<div class="row mono" style="left:5px;top:145px;">0019FF98</div>
<div class="row mono" style="left:84px;top:145px;">003D4000</div>
<div class="row mono" style="left:5px;top:161px;">0019FF9C</div>
<div class="row mono" style="left:84px;top:161px;">00000000</div>
<div class="row mono" style="left:5px;top:177px;">0019FFA0</div>
<div class="row mono" style="left:84px;top:177px;">00000000</div>
<div class="row mono" style="left:5px;top:193px;">0019FFA4</div>
<div class="row mono" style="left:84px;top:193px;">00000000</div>
<div class="row mono" style="left:5px;top:209px;">0019FFA8</div>
<div class="row mono" style="left:84px;top:209px;">00000000</div>
<div class="row mono" style="left:5px;top:225px;">0019FFAC</div>
<div class="row mono" style="left:84px;top:225px;">00000000</div>
<div class="row mono" style="left:5px;top:241px;">0019FFB0</div>
<div class="row mono" style="left:84px;top:241px;">00000000</div>
<div class="row mono" style="left:5px;top:257px;">0019FFB4</div>
<div class="row mono" style="left:84px;top:257px;">00000000</div>
<div class="row mono" style="left:5px;top:273px;">0019FFB8</div>
<div class="row mono" style="left:84px;top:273px;">00000000</div>
<div class="row mono" style="left:5px;top:289px;">0019FFBC</div>
<div class="row mono" style="left:84px;top:289px;">00000000</div>
<div class="row mono" style="left:5px;top:305px;">0019FFC0</div>
<div class="row mono" style="left:84px;top:305px;">00000000</div>
<div class="row mono" style="left:5px;top:321px;">0019FFC4</div>
<div class="row mono" style="left:84px;top:321px;">0019FF8C</div>
<div class="row mono" style="left:5px;top:337px;">0019FFC8</div>
<div class="row mono" style="left:84px;top:337px;">00000000</div>
<div class="row mono" style="left:5px;top:353px;">0019FFCC</div>
<div class="row mono" style="left:84px;top:353px;">0019FFE4</div>
<div class="row mono" style="left:156px;top:353px;"><span class="cj">指向下一个</span> SEH <span class="cj">记录的指针</span></div>
<div class="row mono" style="left:5px;top:369px;">0019FFD0</div>
<div class="row mono" style="left:84px;top:369px;">77BC9420</div>
<div class="row mono" style="left:156px;top:369px;">SE<span class="cj">处理程序</span></div>
<div class="row mono" style="left:5px;top:385px;">0019FFD4</div>
<div class="row mono" style="left:84px;top:385px;">86DF8FCA</div>
<div class="row mono" style="left:5px;top:401px;">0019FFD8</div>
<div class="row mono" style="left:84px;top:401px;">00000000</div>
<div class="row mono" style="left:5px;top:417px;">0019FFDC</div>
<div class="row mono" style="left:84px;top:417px;">0019FFEC</div>
<div class="row mono" style="left:5px;top:433px;">0019FFE0</div>
<div class="row mono" style="left:84px;top:433px;">77BB7054</div>
<div class="row mono" style="left:156px;top:433px;"><span class="cj">返回到</span> ntdll.77BB7054 <span class="cj">来自</span> ntdll.77BB7055</div>
<div class="row mono" style="left:5px;top:449px;">0019FFE4</div>
<div class="row mono" style="left:84px;top:449px;">FFFFFFFF</div>
<div class="row mono" style="left:156px;top:449px;">SEH <span class="cj">链尾部</span></div>
<div class="row mono" style="left:5px;top:465px;">0019FFE8</div>
<div class="row mono" style="left:84px;top:465px;">77BD62C7</div>
<div class="row mono" style="left:156px;top:465px;">SE<span class="cj">处理程序</span></div>
<div class="row mono" style="left:5px;top:481px;">0019FFEC</div>
<div class="row mono" style="left:84px;top:481px;">00000000</div>
<svg class="abs" style="left:0;top:0" width="90" height="440" viewBox="0 0 90 440"><path d="M83 55H77V426H83" stroke="#c0c0c0" stroke-width="2" fill="none" stroke-linejoin="round"/></svg>
</div>
<div class="sb" style="left:1901px;top:514px;width:17px;height:484px"><div class="thumb" style="top:445px;height:17px"></div><svg class="abs" style="left:1px;top:0" width="15" height="17" viewBox="0 0 15 17"><path d="M3.500 11l3.500-3.500l3.500 3.500" stroke="#505050" stroke-width="2" fill="none"/></svg><svg class="abs" style="left:1px;bottom:0" width="15" height="17" viewBox="0 0 15 17"><path d="M3.500 7l3.500 3.500l3.500-3.500" stroke="#505050" stroke-width="2" fill="none"/></svg></div>
<div class="abs" style="left:0;top:1000px;width:1920px;height:21px;background:#f0f0f0"></div>
<div class="abs" style="left:7px;top:1004px;font:bold 11px/14px 'Liberation Serif',serif;transform:scaleX(.74);transform-origin:0 0;color:#ff0000">M1</div>
<div class="abs" style="left:33px;top:1004px;font:bold 11px/14px 'Liberation Serif',serif;transform:scaleX(.74);transform-origin:0 0;color:#000">M2</div>
<div class="abs" style="left:59px;top:1004px;font:bold 11px/14px 'Liberation Serif',serif;transform:scaleX(.74);transform-origin:0 0;color:#000">M3</div>
<div class="abs" style="left:85px;top:1004px;font:bold 11px/14px 'Liberation Serif',serif;transform:scaleX(.74);transform-origin:0 0;color:#000">M4</div>
<div class="abs" style="left:111px;top:1004px;font:bold 11px/14px 'Liberation Serif',serif;transform:scaleX(.74);transform-origin:0 0;color:#000">M5</div>
<div class="abs" style="left:227px;top:1008px;font:10.5px/14px 'Liberation Serif',serif;color:#000">Command:</div>
<div class="abs" style="left:290px;top:1001px;width:200px;height:20px;background:#fff;border-top:1px solid #a0a0a0;border-left:1px solid #a0a0a0;border-right:1px solid #fff;border-bottom:1px solid #fff"><div class="abs" style="left:0;top:0;right:0;bottom:0;border-top:1px solid #696969;border-left:1px solid #696969;border-right:1px solid #e3e3e3;border-bottom:1px solid #e3e3e3"></div><div class="abs" style="left:180px;top:1px;width:17px;height:17px;background:#f0f0f0;border-top:1px solid #fff;border-left:1px solid #fff;border-right:1px solid #696969;border-bottom:1px solid #696969"><div class="abs" style="left:0;top:0;right:0;bottom:0;border-right:1px solid #a0a0a0;border-bottom:1px solid #a0a0a0"></div><svg class="abs" style="left:3px;top:5px" width="8" height="5" viewBox="0 0 8 5"><path d="M0 0h7.600l-3.800 4.500z" fill="#000"/></svg></div></div>
<div class="abs" style="left:500px;top:1003px;width:1330px;height:17px;background:#f0f0f0;border-top:1px solid #a0a0a0;border-left:1px solid #a0a0a0;border-right:1px solid #fff;border-bottom:1px solid #fff"></div>
<div class="abs" style="left:1823px;top:1004px;font:bold 10px/14px 'Liberation Serif',serif;letter-spacing:-.3px;color:#ff0000">ESP</div>
<div class="abs" style="left:1858px;top:1004px;font:bold 10px/14px 'Liberation Serif',serif;letter-spacing:-.3px;color:#000">EBP</div>
<div class="abs" style="left:1890px;top:1004px;font:bold 10px/14px 'Liberation Serif',serif;letter-spacing:-.8px;color:#000">NONE</div>
<div class="abs" style="left:0;top:1020px;width:1920px;height:20px;background:#c0c0c0;border-top:2px solid #fff"></div>
<div class="abs" style="left:1px;top:1022px;width:1875px;height:18px;border-top:1px solid #808080;border-left:1px solid #808080;border-right:1px solid #fff;border-bottom:1px solid #fff"></div>
<div class="abs" style="left:1878px;top:1022px;width:41px;height:18px;border-top:1px solid #808080;border-left:1px solid #808080;border-right:1px solid #fff;border-bottom:1px solid #fff"></div>
<div class="abs" style="left:6px;top:1022px;font-family:'Liberation Sans','Noto Sans CJK SC',sans-serif;font-weight:400;font-size:13px;line-height:16px;color:#000">程序入口点</div>
<div class="abs" style="left:0;top:1040px;width:1920px;height:8px;background:#0a0e2c"></div>
<div class="abs" style="left:1810px;top:1042px;font:12px/14px 'Liberation Sans',sans-serif;color:#fff">7:49:06</div>
<div class="abs" style="left:1735px;top:980px;font-family:'Liberation Sans','Noto Sans CJK SC',sans-serif;font-weight:100;font-size:36px;line-height:40px;letter-spacing:4px;color:#fff;text-shadow:2px 2px 0 #222;white-space:pre">酒入论坛</div>
</body></html>
